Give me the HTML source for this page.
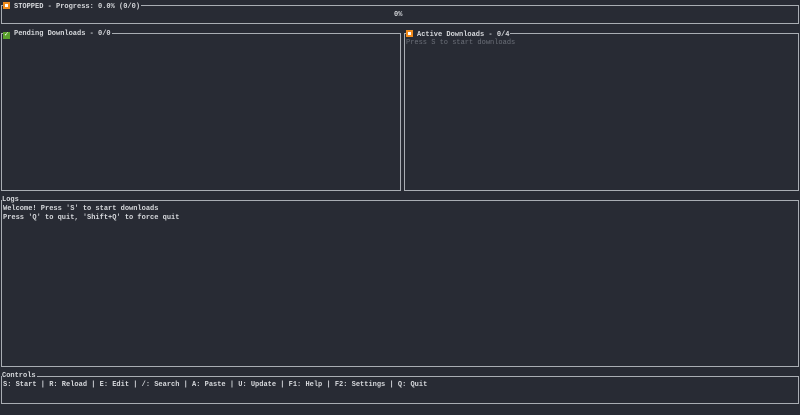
<!DOCTYPE html>
<html><head><meta charset="utf-8"><style>
html,body{margin:0;padding:0;width:800px;height:415px;background:#282b34;overflow:hidden}
body{position:relative;font-family:"Liberation Mono","DejaVu Sans Mono",monospace;font-size:7px;font-weight:bold;color:#d6d8dc}
.b{position:absolute;border:1.5px solid #a9adb3;box-sizing:border-box}
.t{position:absolute;background:#282b34;white-space:pre;line-height:9px;padding-right:1px}
.x{position:absolute;white-space:pre;line-height:9px}
.ic{display:inline-block;width:7px;height:7px;background:#f08a1c;vertical-align:-1px;margin-right:4px;position:relative}
.ic:after{content:"";position:absolute;left:2px;top:2px;width:3px;height:3px;background:#fff}
.ck{display:inline-block;width:7px;height:7px;background:#5aa02c;vertical-align:-1px;margin-right:4px;color:#fff;font-size:7px;line-height:7px;text-align:center}
</style></head><body>
<div class="b" style="left:1px;top:5px;width:798px;height:19px"></div>
<div class="t" style="left:3px;top:2px"><span class="ic"></span>STOPPED - Progress: 0.0% (0/0)</div>
<div class="x" style="left:394px;top:11px">0%</div>

<div class="b" style="left:1px;top:33px;width:400px;height:158px"></div>
<div class="t" style="left:3px;top:30px"><span class="ck">✓</span>Pending Downloads - 0/0</div>

<div class="b" style="left:404px;top:33px;width:395px;height:158px"></div>
<div class="t" style="left:406px;top:30px"><span class="ic"></span>Active Downloads - 0/4</div>
<div class="x" style="left:406px;top:39px;color:#6b6f78;font-weight:normal">Press S to start downloads</div>

<div class="b" style="left:1px;top:200px;width:798px;height:167px"></div>
<div class="t" style="left:2px;top:196px">Logs</div>
<div class="x" style="left:3px;top:205px">Welcome! Press 'S' to start downloads
Press 'Q' to quit, 'Shift+Q' to force quit</div>

<div class="b" style="left:1px;top:376px;width:798px;height:28px"></div>
<div class="t" style="left:2px;top:372px">Controls</div>
<div class="x" style="left:3px;top:381px">S: Start | R: Reload | E: Edit | /: Search | A: Paste | U: Update | F1: Help | F2: Settings | Q: Quit</div>
</body></html>
